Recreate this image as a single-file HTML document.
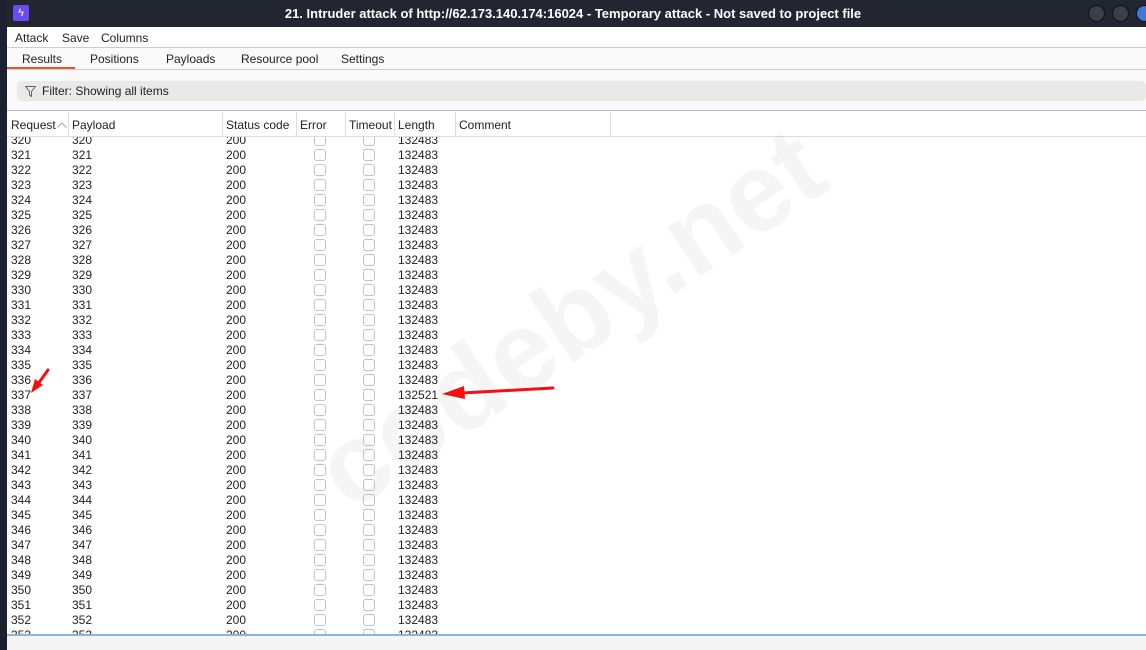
<!DOCTYPE html>
<html><head><meta charset="utf-8"><style>
*{margin:0;padding:0;box-sizing:border-box}
body{width:1146px;height:650px;overflow:hidden;background:#fff;font-family:"Liberation Sans","DejaVu Sans",sans-serif;font-size:12px;color:#222;position:relative}
.left{position:absolute;left:0;top:0;width:7px;height:650px;background:#1c2130}
.title{position:absolute;left:0;top:0;width:1146px;height:27px;background:#222631;color:#fff;font-weight:bold;font-size:13px;line-height:27px;text-align:center}
.logo{position:absolute;left:13px;top:5px;width:16px;height:16px;background:#6a4cf0;border-radius:2px;color:#fff;font-size:11px;line-height:16px;text-align:center}
.dot{position:absolute;top:5px;width:17px;height:17px;border-radius:50%;background:#3a3f4a;border:1px solid #111}
.menu{position:absolute;left:7px;top:27px;right:0;height:21px;background:#fff;border-bottom:1px solid #ccc}
.menu span{position:absolute;top:4px}
.tabs{position:absolute;left:7px;top:48px;right:0;height:22px;background:#f9f9f9;border-bottom:1px solid #ccc}
.tabs span{position:absolute;top:4px}
.ul{position:absolute;left:7px;top:67px;width:68px;height:2px;background:#e8532a}
.filterbg{position:absolute;left:7px;top:70px;right:0;height:41px;background:#f9f9f9;border-bottom:1px solid #a9c1dc}
.filter{position:absolute;left:17px;top:81px;width:1129px;height:20px;background:#e9e9e9;border-radius:5px;line-height:20px;padding-left:25px}
.hdr{position:absolute;left:7px;top:112px;right:0;height:25px;background:#fff;border-bottom:1px solid #ddd}
.hdr span{position:absolute;top:6px;white-space:nowrap}
.hdr i{position:absolute;top:0;width:1px;height:25px;background:#ddd}
.body{position:absolute;left:7px;top:137px;width:1139px;height:497px;overflow:hidden}
.r{position:absolute;left:0;height:15px;line-height:15px;width:600px}
.r b{font-weight:normal;position:absolute}
.c1{left:4px}.c2{left:65px}.c3{left:219px}.c6{left:391px}
.cb{position:absolute;width:12px;height:12px;border:1px solid #c2c2c2;border-radius:3px;top:1px}
.e{left:307px}.t{left:356px}
.foot{position:absolute;left:7px;top:634px;right:0;height:16px;background:#f5f5f5;border-top:2px solid #8fb3dd}
.wm{position:absolute;left:570px;top:318px;transform:translate(-50%,-50%) rotate(-34deg);font-weight:bold;font-size:112px;color:#000;opacity:.035;white-space:nowrap;font-family:"Liberation Sans",sans-serif}
.arrow{position:absolute}
</style></head><body>
<div class="title">21. Intruder attack of http://62.173.140.174:16024 - Temporary attack - Not saved to project file</div>
<div class="left"></div>
<div class="logo">ϟ</div>
<div class="dot" style="left:1088px"></div><div class="dot" style="left:1112px"></div><div class="dot" style="left:1136px;background:#3b78e0"></div>
<div class="menu"><span style="left:8px">Attack</span><span style="left:55px">Save</span><span style="left:94px">Columns</span></div>
<div class="tabs"><span style="left:15px">Results</span><span style="left:83px">Positions</span><span style="left:159px">Payloads</span><span style="left:234px">Resource pool</span><span style="left:334px">Settings</span></div>
<div class="ul"></div>
<div class="filterbg"></div>
<div class="filter"><svg style="position:absolute;left:8px;top:5px" width="11" height="11" viewBox="0 0 11 11"><path d="M0.5 0.5h10L6.5 5.5v5l-2-1.5v-3.5z" fill="none" stroke="#666"/></svg>Filter: Showing all items</div>
<div class="hdr">
<span style="left:4px">Request</span><svg style="position:absolute;left:50px;top:10px" width="10" height="6"><path d="M0.5 5.5L5 1l4.5 4.5" fill="none" stroke="#aaa"/></svg><i style="left:61px"></i>
<span style="left:65px">Payload</span><i style="left:215px"></i>
<span style="left:219px">Status code</span><i style="left:289px"></i>
<span style="left:293px">Error</span><i style="left:338px"></i>
<span style="left:342px">Timeout</span><i style="left:387px"></i>
<span style="left:391px">Length</span><i style="left:448px"></i>
<span style="left:452px">Comment</span><i style="left:603px"></i>
</div>
<div class="wm">codeby.net</div>
<div class="body">
<div class="r" style="top:-4px"><b class="c1">320</b><b class="c2">320</b><b class="c3">200</b><span class="cb e"></span><span class="cb t"></span><b class="c6">132483</b></div>
<div class="r" style="top:11px"><b class="c1">321</b><b class="c2">321</b><b class="c3">200</b><span class="cb e"></span><span class="cb t"></span><b class="c6">132483</b></div>
<div class="r" style="top:26px"><b class="c1">322</b><b class="c2">322</b><b class="c3">200</b><span class="cb e"></span><span class="cb t"></span><b class="c6">132483</b></div>
<div class="r" style="top:41px"><b class="c1">323</b><b class="c2">323</b><b class="c3">200</b><span class="cb e"></span><span class="cb t"></span><b class="c6">132483</b></div>
<div class="r" style="top:56px"><b class="c1">324</b><b class="c2">324</b><b class="c3">200</b><span class="cb e"></span><span class="cb t"></span><b class="c6">132483</b></div>
<div class="r" style="top:71px"><b class="c1">325</b><b class="c2">325</b><b class="c3">200</b><span class="cb e"></span><span class="cb t"></span><b class="c6">132483</b></div>
<div class="r" style="top:86px"><b class="c1">326</b><b class="c2">326</b><b class="c3">200</b><span class="cb e"></span><span class="cb t"></span><b class="c6">132483</b></div>
<div class="r" style="top:101px"><b class="c1">327</b><b class="c2">327</b><b class="c3">200</b><span class="cb e"></span><span class="cb t"></span><b class="c6">132483</b></div>
<div class="r" style="top:116px"><b class="c1">328</b><b class="c2">328</b><b class="c3">200</b><span class="cb e"></span><span class="cb t"></span><b class="c6">132483</b></div>
<div class="r" style="top:131px"><b class="c1">329</b><b class="c2">329</b><b class="c3">200</b><span class="cb e"></span><span class="cb t"></span><b class="c6">132483</b></div>
<div class="r" style="top:146px"><b class="c1">330</b><b class="c2">330</b><b class="c3">200</b><span class="cb e"></span><span class="cb t"></span><b class="c6">132483</b></div>
<div class="r" style="top:161px"><b class="c1">331</b><b class="c2">331</b><b class="c3">200</b><span class="cb e"></span><span class="cb t"></span><b class="c6">132483</b></div>
<div class="r" style="top:176px"><b class="c1">332</b><b class="c2">332</b><b class="c3">200</b><span class="cb e"></span><span class="cb t"></span><b class="c6">132483</b></div>
<div class="r" style="top:191px"><b class="c1">333</b><b class="c2">333</b><b class="c3">200</b><span class="cb e"></span><span class="cb t"></span><b class="c6">132483</b></div>
<div class="r" style="top:206px"><b class="c1">334</b><b class="c2">334</b><b class="c3">200</b><span class="cb e"></span><span class="cb t"></span><b class="c6">132483</b></div>
<div class="r" style="top:221px"><b class="c1">335</b><b class="c2">335</b><b class="c3">200</b><span class="cb e"></span><span class="cb t"></span><b class="c6">132483</b></div>
<div class="r" style="top:236px"><b class="c1">336</b><b class="c2">336</b><b class="c3">200</b><span class="cb e"></span><span class="cb t"></span><b class="c6">132483</b></div>
<div class="r" style="top:251px"><b class="c1">337</b><b class="c2">337</b><b class="c3">200</b><span class="cb e"></span><span class="cb t"></span><b class="c6">132521</b></div>
<div class="r" style="top:266px"><b class="c1">338</b><b class="c2">338</b><b class="c3">200</b><span class="cb e"></span><span class="cb t"></span><b class="c6">132483</b></div>
<div class="r" style="top:281px"><b class="c1">339</b><b class="c2">339</b><b class="c3">200</b><span class="cb e"></span><span class="cb t"></span><b class="c6">132483</b></div>
<div class="r" style="top:296px"><b class="c1">340</b><b class="c2">340</b><b class="c3">200</b><span class="cb e"></span><span class="cb t"></span><b class="c6">132483</b></div>
<div class="r" style="top:311px"><b class="c1">341</b><b class="c2">341</b><b class="c3">200</b><span class="cb e"></span><span class="cb t"></span><b class="c6">132483</b></div>
<div class="r" style="top:326px"><b class="c1">342</b><b class="c2">342</b><b class="c3">200</b><span class="cb e"></span><span class="cb t"></span><b class="c6">132483</b></div>
<div class="r" style="top:341px"><b class="c1">343</b><b class="c2">343</b><b class="c3">200</b><span class="cb e"></span><span class="cb t"></span><b class="c6">132483</b></div>
<div class="r" style="top:356px"><b class="c1">344</b><b class="c2">344</b><b class="c3">200</b><span class="cb e"></span><span class="cb t"></span><b class="c6">132483</b></div>
<div class="r" style="top:371px"><b class="c1">345</b><b class="c2">345</b><b class="c3">200</b><span class="cb e"></span><span class="cb t"></span><b class="c6">132483</b></div>
<div class="r" style="top:386px"><b class="c1">346</b><b class="c2">346</b><b class="c3">200</b><span class="cb e"></span><span class="cb t"></span><b class="c6">132483</b></div>
<div class="r" style="top:401px"><b class="c1">347</b><b class="c2">347</b><b class="c3">200</b><span class="cb e"></span><span class="cb t"></span><b class="c6">132483</b></div>
<div class="r" style="top:416px"><b class="c1">348</b><b class="c2">348</b><b class="c3">200</b><span class="cb e"></span><span class="cb t"></span><b class="c6">132483</b></div>
<div class="r" style="top:431px"><b class="c1">349</b><b class="c2">349</b><b class="c3">200</b><span class="cb e"></span><span class="cb t"></span><b class="c6">132483</b></div>
<div class="r" style="top:446px"><b class="c1">350</b><b class="c2">350</b><b class="c3">200</b><span class="cb e"></span><span class="cb t"></span><b class="c6">132483</b></div>
<div class="r" style="top:461px"><b class="c1">351</b><b class="c2">351</b><b class="c3">200</b><span class="cb e"></span><span class="cb t"></span><b class="c6">132483</b></div>
<div class="r" style="top:476px"><b class="c1">352</b><b class="c2">352</b><b class="c3">200</b><span class="cb e"></span><span class="cb t"></span><b class="c6">132483</b></div>
<div class="r" style="top:491px"><b class="c1">353</b><b class="c2">353</b><b class="c3">200</b><span class="cb e"></span><span class="cb t"></span><b class="c6">132483</b></div>
</div>
<div class="foot"></div>
<svg class="arrow" style="left:0;top:0" width="1146" height="650">
<path d="M553 388L462 393" stroke="#f21010" stroke-width="3" stroke-linecap="round"/>
<path d="M442 394L464 386L465 399Z" fill="#f21010"/>
<path d="M48 370L38 384" stroke="#f21010" stroke-width="3" stroke-linecap="round"/>
<path d="M31 393L35 379L43 385Z" fill="#f21010"/>
</svg>
</body></html>
